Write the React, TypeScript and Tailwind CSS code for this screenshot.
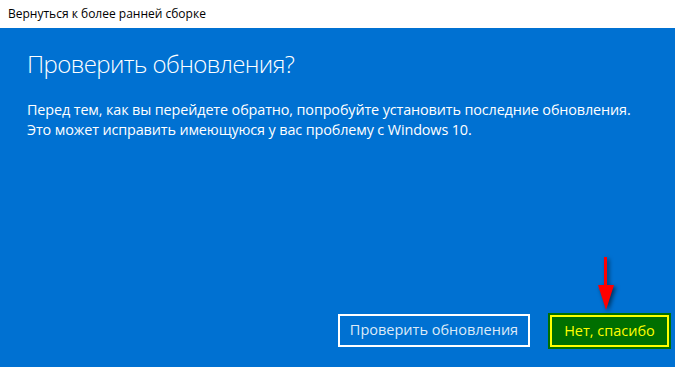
export default function App() {
  const font = { fontFamily: '"Open Sans", "Noto Sans", sans-serif' };

  return (
    <div className="w-[675px] h-[367px] flex flex-col overflow-hidden" style={font}>
      {/* Title bar */}
      <div className="h-[28px] bg-white flex items-center pl-[8px] text-[12px] text-black">
        Вернуться к более ранней сборке
      </div>

      {/* Blue body */}
      <div className="relative flex-1 bg-[#0071d2] flex flex-col text-white">
        <div className="px-[27px] pt-[20px]">
          <h1 className="text-[24px] font-light leading-[32px] tracking-[-0.6px]">
            Проверить обновления?
          </h1>
          <p className="mt-[20px] text-[14.4px] leading-[20px] tracking-[-0.12px]">
            Перед тем, как вы перейдете обратно, попробуйте установить последние обновления.
            <br />
            Это может исправить имеющуюся у вас проблему с Windows 10.
          </p>
        </div>

        <div className="mt-auto flex items-center justify-end gap-[18px] pr-[4px] pb-[18px]">
          <button className="w-[192px] h-[33px] mb-[2px] border-2 border-white text-[14.5px] text-[#dceaf8] flex items-center justify-center">
            Проверить обновления
          </button>
          <div className="bg-[#006f00] p-[2px]">
            <button className="w-[119px] h-[32px] border-2 border-[#ffff00] bg-[#006f00] text-[14.5px] text-[#ffff00] flex items-center justify-center">
              Нет, спасибо
            </button>
          </div>
        </div>

        {/* Red annotation arrow */}
        <svg
          className="absolute left-[596px] top-[229px]"
          width="20"
          height="54"
          viewBox="0 0 20 54"
          style={{ filter: "drop-shadow(2px 2px 2px rgba(0,0,0,0.55))" }}
        >
          <rect x="8" y="0" width="3" height="32" fill="#ff0000" />
          <polygon points="2,28 18,28 10,53" fill="#ff0000" />
        </svg>
      </div>
    </div>
  );
}
